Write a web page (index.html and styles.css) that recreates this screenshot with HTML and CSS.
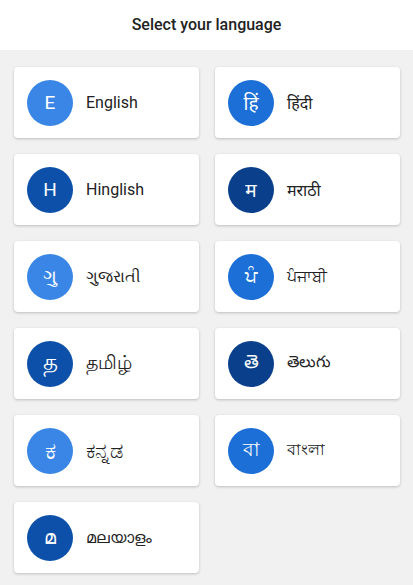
FILE: index.html
```html
<!DOCTYPE html>
<html lang="en">
<head>
<meta charset="utf-8">
<title>Select your language</title>
<link rel="stylesheet" href="styles.css">
</head>
<body>
<header class="header">Select your language</header>
<main class="grid">
  <div class="card"><span class="badge c1">E</span><span class="label">English</span></div>
  <div class="card"><span class="badge c2">हिं</span><span class="label">हिंदी</span></div>
  <div class="card"><span class="badge c3">H</span><span class="label">Hinglish</span></div>
  <div class="card"><span class="badge c4">म</span><span class="label">मराठी</span></div>
  <div class="card"><span class="badge c1">ગુ</span><span class="label">ગુજરાતી</span></div>
  <div class="card"><span class="badge c2">ਪੰ</span><span class="label">ਪੰਜਾਬੀ</span></div>
  <div class="card"><span class="badge c3 big">த</span><span class="label big">தமிழ்</span></div>
  <div class="card"><span class="badge c4">తె</span><span class="label">తెలుగు</span></div>
  <div class="card"><span class="badge c1 kn">ಕ</span><span class="label kn">ಕನ್ನಡ</span></div>
  <div class="card"><span class="badge c2">বা</span><span class="label">বাংলা</span></div>
  <div class="card"><span class="badge c3">മ</span><span class="label">മലയാളം</span></div>
</main>
</body>
</html>
```
FILE: styles.css
```css
html, body {
  margin: 0;
  padding: 0;
}
body {
  background: #f1f1f1;
  font-family: Roboto, "Noto Sans", "DejaVu Sans", sans-serif;
  color: #202020;
  width: 413px;
  height: 585px;
  overflow: hidden;
}
.header {
  height: 50px;
  background: #ffffff;
  display: flex;
  align-items: center;
  justify-content: center;
  font-size: 16px;
  font-weight: 500;
  color: #222222;
  padding-bottom: 2px;
  box-sizing: border-box;
}
.grid {
  display: grid;
  grid-template-columns: 185px 185px;
  column-gap: 16px;
  row-gap: 16px;
  padding: 17px 13px 0 14px;
}
.card {
  height: 71px;
  background: #ffffff;
  border-radius: 4px;
  box-shadow: 0 1px 3px rgba(0, 0, 0, 0.22);
  display: flex;
  align-items: center;
  padding-left: 13px;
  box-sizing: border-box;
}
.badge {
  width: 46px;
  height: 46px;
  border-radius: 50%;
  display: flex;
  align-items: center;
  justify-content: center;
  color: #ffffff;
  font-size: 19px;
  flex-shrink: 0;
  margin-right: 13px;
}
.c1 { background: #3a86e6; }
.c2 { background: #1b6fd7; }
.c3 { background: #0c50a9; }
.c4 { background: #0a3f8b; }
.label {
  font-size: 16px;
  color: #222222;
}
.badge.big {
  font-size: 23px;
}
.label.big {
  font-size: 19px;
}
.badge.kn {
  font-size: 25px;
}
.label.kn {
  font-size: 21px;
}
```
